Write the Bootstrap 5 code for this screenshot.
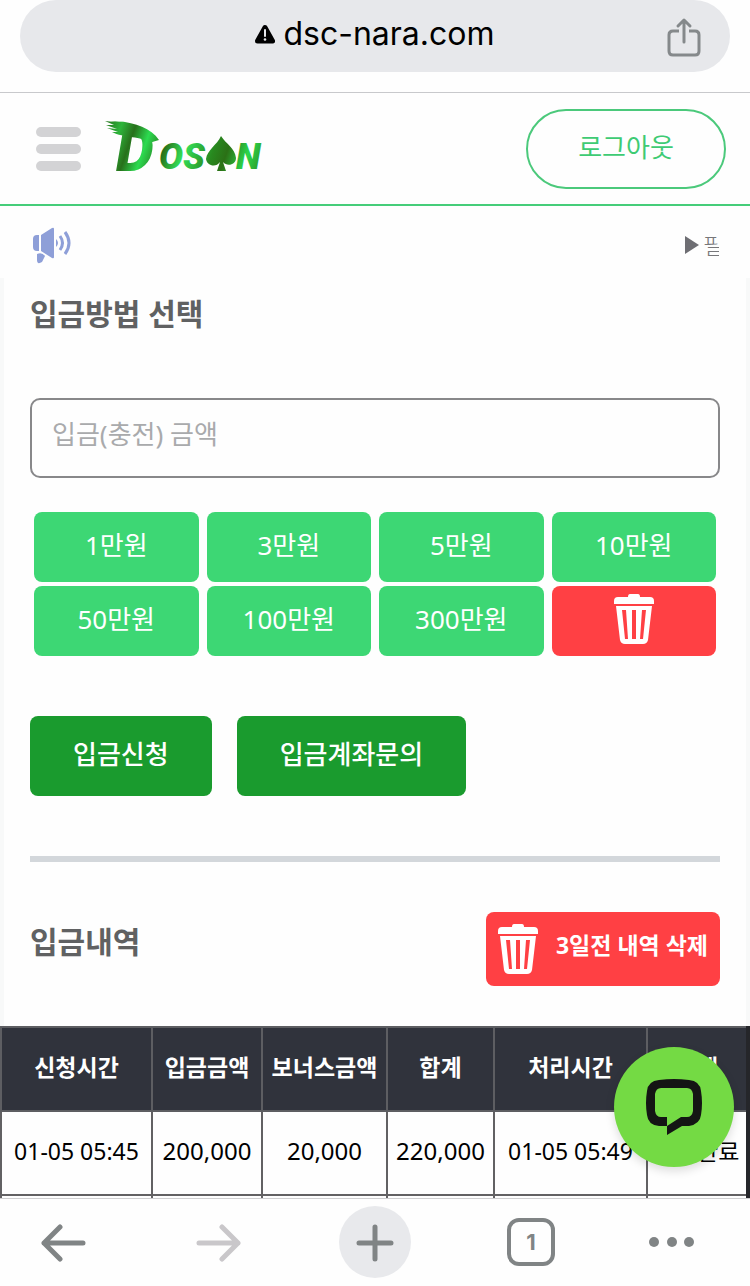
<!DOCTYPE html>
<html lang="ko">
<head>
<meta charset="utf-8">
<meta name="viewport" content="width=device-width, initial-scale=1">
<title>DOSAN</title>
<link href="https://cdn.jsdelivr.net/npm/bootstrap@5.3.0/dist/css/bootstrap.min.css" rel="stylesheet">
<style>
  body { font-family: "Noto Sans", "Noto Sans CJK KR", sans-serif; font-size: 26px; line-height: 36px; color: #000; background: #fefefe; }
  .url-bar { height: 72px; background: #e7e8eb; border-radius: 36px; }
  .url-text { font-family: Inter, sans-serif; font-size: 32px; line-height: 40px; color: #000; }
  .browser-top { padding-bottom: 20px; border-bottom: 1px solid #c8c9cc; }
  .share-btn { right: 24px; top: 16px; }
  .site-header { height: 113px; padding: 0 24px 0 36px; border-bottom: 2px solid #45cd79; }
  .menu-btn { width: 45px; gap: 7px; }
  .menu-btn span { height: 10px; border-radius: 5px; background: #d3d3d5; }
  .logout-btn { width: 200px; height: 80px; padding: 0 0 4px; border: 2px solid #4bc97b; border-radius: 40px; color: #3ecb74; background: transparent; font-size: 26px; }
  .notice { height: 72px; padding: 6px 31px 0 32px; }
  .notice-text { width: 34px; font-size: 23px; font-weight: 300; color: #77777a; }
  .page-body { border: solid #f8f9f9; border-width: 0 4px; }
  .inner { padding: 0 26px; }
  h1, h2 { font-size: 30px; line-height: 40px; font-weight: 700; color: #606162; }
  .page-title { padding: 16px 0 64px; }
  .amount-input { height: 80px; padding: 0 20px 8px; border: 2px solid #88888a; border-radius: 10px; font-size: 26px; background: #fefefe; }
  .amount-input::placeholder { color: #a9aaac; opacity: 1; }
  .quick-grid { display: grid; grid-template-columns: repeat(4, 1fr); gap: 4px 8px; padding: 34px 4px 60px; }
  .quick-btn { height: 70px; padding: 0 0 4px; border: 0; border-radius: 8px; background: #3dd774; color: #fff; font-size: 26px; }
  .danger-btn, .danger-btn:hover { background: #ff4044; color: #fff; }
  .submit-btn { height: 80px; padding: 0 43px 4px; border: 0; border-radius: 8px; background: #1a9b2e; color: #fff; font-size: 26px; font-weight: 500; }
  .submit-row { gap: 25px; }
  .divider { height: 6px; margin: 60px 0 50px; border: 0; background: #d3d7db; opacity: 1; }
  .history-head { padding-bottom: 40px; }
  .history-head h2 { padding-bottom: 14px; }
  .clear-btn { height: 74px; padding: 0 12px; border: 0; border-radius: 8px; gap: 18px; font-size: 23px; font-weight: 700; }
  .clear-btn span { padding-bottom: 8px; }
  .history { table-layout: fixed; width: 100%; border-collapse: collapse; text-align: center; white-space: nowrap; border-right: 4px solid #25262a; }
  .history th, .history td { height: 84px; padding: 0 0 4px; border: 2px solid #626163; vertical-align: middle; }
  .history th { background: #30333c; color: #fff; font-size: 23px; font-weight: 700; border-color: #5d5e62; }
  .history td { font-size: 23px; }
  .history .amount-cell { font-size: 24px; }
  .w-asked { width: 151px; } .w-done { width: 153px; } .w-amount { width: 110px; } .w-bonus { width: 125px; } .w-sum { width: 107px; }
  .chat-btn { right: 16px; bottom: 100%; margin-bottom: 32px; width: 120px; height: 120px; border: 0; background: #74da44; box-shadow: 0 4px 10px #0002; }
  .browser-nav { height: 88px; padding: 0 27px 1px; border-top: 1px solid #cfcfd1; background: #fefefe; }
  .nav-ico { width: 72px; height: 72px; background: none; border: 0; padding: 0; }
  .new-tab { border-radius: 50%; background: #e8e9ec; }
  .tab-count { width: 48px; height: 48px; margin: 0 12px; border: 4px solid #808485; border-radius: 12px; font-family: Inter, sans-serif; font-size: 22px; line-height: 40px; font-weight: 700; color: #808485; }
</style>
</head>
<body class="vh-100 d-flex flex-column overflow-hidden">
<svg class="d-none">
  <symbol id="trash" viewBox="0 0 40 50">
    <path fill="currentColor" d="M16 0h8q2 0 2 3h10q4 0 4 4v3H0V7q0-4 4-4h10q0-3 2-3z"/>
    <path fill="currentColor" fill-rule="evenodd" d="M2 12h36l-4 34q-1 4-5 4H11q-4 0-5-4zM8 16l3 29h3l-2-29zM18 16v29h4V16zM28 16l-2 29h3l3-29z"/>
  </symbol>
</svg>

<div class="browser-top px-3 flex-shrink-0">
  <div class="url-bar position-relative d-flex justify-content-center align-items-center mx-1">
    <div class="d-flex align-items-center gap-2 pb-1">
      <svg width="20" height="20" viewBox="0 0 20 20"><path d="M10 3.5 17.5 17h-15z" stroke="#000" stroke-width="5" stroke-linejoin="round"/><path d="M10 6v6" stroke="#e7e8eb" stroke-width="2" stroke-linecap="round"/><circle cx="10" cy="15.5" r="1.3" fill="#e7e8eb"/></svg>
      <span class="url-text">dsc-nara.com</span>
    </div>
    <button class="share-btn btn p-0 border-0 position-absolute d-flex" aria-label="공유">
      <svg width="44" height="44" viewBox="0 0 44 44" fill="none" stroke="#85898b" stroke-width="3" stroke-linecap="round" stroke-linejoin="round"><path stroke-linecap="butt" d="M17 15h-6q-4 0-4 4v16q0 4 4 4h22q4 0 4-4V19q0-4-4-4h-6"/><path d="M22 26V4m-6 6 6-6 6 6"/></svg>
    </button>
  </div>
</div>

<header class="site-header d-flex align-items-center flex-shrink-0">
  <button class="menu-btn btn p-0 border-0 d-flex flex-column" aria-label="메뉴"><span></span><span></span><span></span></button>
  <a href="#" class="ms-4 d-flex" aria-label="DOSAN">
    <svg width="164" height="56" viewBox="0 0 164 56" overflow="visible">
      <defs>
        <linearGradient id="leaf" x1="0" y1="0" x2="160" y2="56" gradientUnits="userSpaceOnUse">
          <stop offset="0" stop-color="#25731c"/><stop offset=".1" stop-color="#2eb53b"/><stop offset=".18" stop-color="#27701b"/><stop offset=".27" stop-color="#2cdb50"/><stop offset=".38" stop-color="#276f19"/><stop offset=".5" stop-color="#34e15a"/><stop offset=".66" stop-color="#28891f"/><stop offset=".74" stop-color="#2b7016"/><stop offset=".86" stop-color="#2bd84c"/><stop offset="1" stop-color="#2d7817"/>
        </linearGradient>
      </defs>
      <g fill="url(#leaf)">
        <path d="M0 0 10 1 6 0 18 1 14 0C30 2 46 7 54 19L44 22C38 15 18 17 7 11L13 11 2 7 12 8 1 4 9 4z"/>
        <path d="M116 15C121 23 130 27 131 37 131 44 122 46 118 41L121 50H112L115 41C111 47 102 45 101 38 102 29 112 24 116 15z"/>
        <g font-family="Roboto, sans-serif" font-weight="900" font-style="italic" font-size="36"><text x="11" y="50" font-size="60">D</text><text x="54" y="48">O</text><text x="78" y="48">S</text><text x="131" y="48">N</text></g>
      </g>
    </svg>
  </a>
  <button class="logout-btn ms-auto">로그아웃</button>
</header>

<main class="flex-grow-1 overflow-hidden">
  <div class="notice d-flex align-items-center justify-content-between">
    <svg width="40" height="38" viewBox="0 0 40 38" fill="#8e9fd8"><path d="M7 9v16H5q-4 0-4-4v-8q0-4 4-4zM9 9 20 2q2-1 2 1v28q0 2-2 1L9 25zM5 28q5-2 8 2l-3 6q-5 3-5-2zM24 13q4 4 0 8z"/><path d="M28 10q5 7 0 14M33 6q8 11 0 22" fill="none" stroke="#8e9fd8" stroke-width="3"/></svg>
    <div class="notice-text d-flex align-items-center overflow-hidden">
      <svg class="flex-shrink-0 me-1" width="14" height="18" viewBox="0 0 14 18"><path d="m0 0 14 9-14 9z" fill="#6e6e73"/></svg>필
    </div>
  </div>

  <div class="page-body">
    <div class="inner">
      <h1 class="page-title m-0"><label for="amount">입금방법 선택</label></h1>
      <input id="amount" class="amount-input w-100 d-block" type="text" inputmode="numeric" placeholder="입금(충전) 금액">
      <div class="quick-grid">
        <button class="quick-btn">1만원</button>
        <button class="quick-btn">3만원</button>
        <button class="quick-btn">5만원</button>
        <button class="quick-btn">10만원</button>
        <button class="quick-btn">50만원</button>
        <button class="quick-btn">100만원</button>
        <button class="quick-btn">300만원</button>
        <button class="quick-btn danger-btn d-flex justify-content-center align-items-center" aria-label="지우기"><svg width="40" height="50"><use href="#trash"/></svg></button>
      </div>
      <div class="submit-row d-flex">
        <button class="submit-btn">입금신청</button>
        <button class="submit-btn">입금계좌문의</button>
      </div>
      <hr class="divider">
      <div class="history-head d-flex justify-content-between align-items-center">
        <h2 class="m-0">입금내역</h2>
        <button class="clear-btn danger-btn d-flex align-items-center"><svg width="40" height="50"><use href="#trash"/></svg><span>3일전 내역 삭제</span></button>
      </div>
    </div>
  </div>

  <table class="history">
    <colgroup><col class="w-asked"><col class="w-amount"><col class="w-bonus"><col class="w-sum"><col class="w-done"><col></colgroup>
    <thead><tr><th>신청시간</th><th>입금금액</th><th>보너스금액</th><th>합계</th><th>처리시간</th><th>상태</th></tr></thead>
    <tbody>
      <tr><td>01-05 05:45</td><td class="amount-cell">200,000</td><td class="amount-cell">20,000</td><td class="amount-cell">220,000</td><td>01-05 05:49</td><td>입금완료</td></tr>
      <tr><td></td><td></td><td></td><td></td><td></td><td></td></tr>
    </tbody>
  </table>
</main>

<nav class="browser-nav position-relative d-flex flex-shrink-0 align-items-center justify-content-between">
  <button class="nav-ico" aria-label="뒤로"><svg width="46" height="38" viewBox="0 0 46 38" fill="none" stroke="#808485" stroke-width="5" stroke-linecap="round" stroke-linejoin="round"><path d="M43 19H4M20 3 4 19l16 16"/></svg></button>
  <button class="nav-ico" aria-label="앞으로"><svg width="46" height="38" viewBox="0 0 46 38" fill="none" stroke="#c9c7ca" stroke-width="5" stroke-linecap="round" stroke-linejoin="round"><path d="M3 19h39M26 3l16 16-16 16"/></svg></button>
  <button class="nav-ico new-tab" aria-label="새 탭"><svg width="38" height="38" viewBox="0 0 38 38" stroke="#808485" stroke-width="5" stroke-linecap="round"><path d="M19 3v32M3 19h32"/></svg></button>
  <button class="nav-ico tab-count">1</button>
  <button class="nav-ico d-flex align-items-center" aria-label="더보기"><svg width="46" height="12" viewBox="2 0 46 12" overflow="visible" fill="#808485"><circle cx="5" cy="6" r="5"/><circle cx="23" cy="6" r="5"/><circle cx="40" cy="6" r="5"/></svg></button>
  <button class="chat-btn rounded-circle position-absolute d-flex align-items-center justify-content-center" aria-label="채팅 상담">
    <svg width="56" height="56" viewBox="0 0 56 56"><path fill="#141514" fill-rule="evenodd" d="M13 1Q28-1 43 1 54 2 55 12 57 24 55 36 54 45 43 47H36L21 56V47H13Q2 46 1 36-1 24 1 12 2 2 13 1zM15 9Q10 9 9 15V32Q10 38 15 38H21V47L35 38H41Q46 38 47 32V15Q46 9 41 9z"/></svg>
  </button>
</nav>
<script src="https://cdn.jsdelivr.net/npm/bootstrap@5.3.0/dist/js/bootstrap.bundle.min.js"></script>
</body>
</html>
